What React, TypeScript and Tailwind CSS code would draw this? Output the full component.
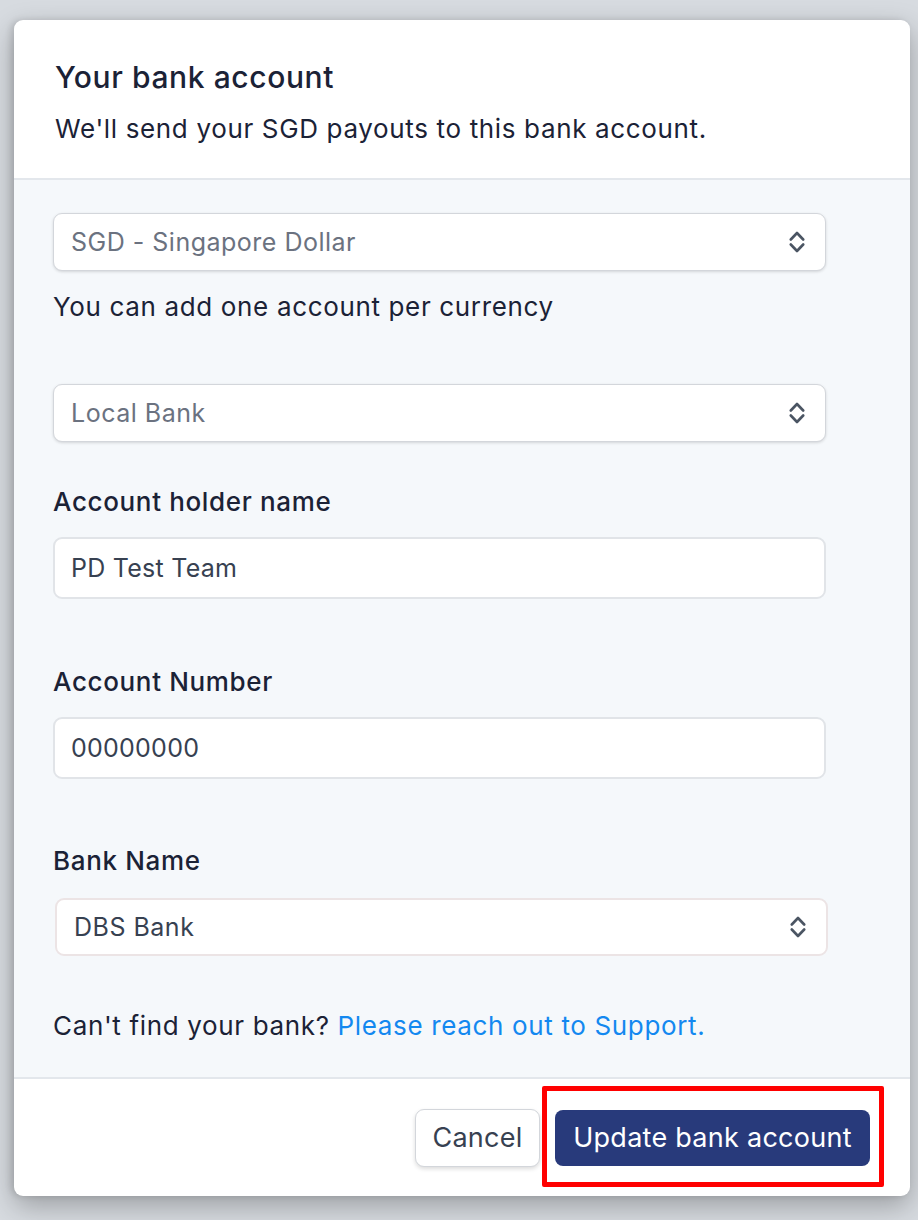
import React from 'react';

const Chevrons = () => (
  <svg width="16" height="24" viewBox="0 0 16 24" fill="none" stroke="#4b5563" strokeWidth="2.6" strokeLinecap="round" strokeLinejoin="round">
    <path d="M1.8 9.5 L8 3 L14.2 9.5" />
    <path d="M1.8 14.5 L8 21 L14.2 14.5" />
  </svg>
);

const SelectBox = ({ value, muted, className }: { value: string; muted?: boolean; className: string }) => (
  <div className={`flex items-center justify-between bg-white rounded-[9px] pl-[17px] pr-[20px] text-[25px] tracking-[0.02em] ${className}`}>
    <span className={muted ? 'text-[#6b7280]' : 'text-[#374151]'}>{value}</span>
    <Chevrons />
  </div>
);

const TextInput = ({ value }: { value: string }) => (
  <div className="flex items-center h-[62px] w-[773px] bg-white rounded-[9px] border-2 border-[#e1e4e8] px-[16px] text-[25px] tracking-[0.01em] text-[#374151]">
    {value}
  </div>
);

const App = () => {
  return (
    <div className="min-h-screen bg-[#d7dbe0] pt-[20px] pl-[14px] font-['Inter',sans-serif] text-[26px] tracking-[0.025em] leading-[36px] text-[#1b2236]">
      <div className="w-[896px] bg-white rounded-[9px] overflow-hidden shadow-[0_10px_28px_rgba(0,0,0,0.28),-3px_0_6px_rgba(0,0,0,0.12)]">
        {/* Header */}
        <div className="px-[41px] pt-[39px] pb-[31px] border-b-2 border-[#e3e7ec]">
          <h2 className="text-[30px] font-medium tracking-[0.02em]">Your bank account</h2>
          <p className="mt-[16px]">We'll send your SGD payouts to this bank account.</p>
        </div>

        {/* Form body */}
        <div className="bg-[#f5f8fb] px-[39px] pt-[33px] pb-[33px] flex flex-col">
          <SelectBox
            value="SGD - Singapore Dollar"
            muted
            className="h-[58px] w-[773px] border border-[#d3d6db] shadow-[0_1px_3px_rgba(0,0,0,0.14)]"
          />
          <p className="mt-[18px]">You can add one account per currency</p>
          <SelectBox
            value="Local Bank"
            muted
            className="mt-[59px] h-[58px] w-[773px] border border-[#d3d6db] shadow-[0_1px_3px_rgba(0,0,0,0.14)]"
          />

          <label className="mt-[42px] font-medium">Account holder name</label>
          <div className="mt-[17px]">
            <TextInput value="PD Test Team" />
          </div>

          <label className="mt-[65px] font-medium">Account Number</label>
          <div className="mt-[17px]">
            <TextInput value="00000000" />
          </div>

          <label className="mt-[64px] font-medium">Bank Name</label>
          <SelectBox
            value="DBS Bank"
            className="mt-[19px] ml-[2px] pl-[17px] h-[58px] w-[773px] border-2 border-[#ece4e5]"
          />

          <p className="mt-[52px]">
            Can't find your bank? <a className="text-[#1388f0]">Please reach out to Support.</a>
          </p>
        </div>

        {/* Footer */}
        <div className="border-t-2 border-[#e3e7ec] h-[119px] flex items-center justify-end gap-[15px] pr-[40px] text-[27px] tracking-[0.01em]">
          <button className="h-[58px] w-[125px] rounded-[9px] bg-white border border-[#d3d6db] shadow-[0_2px_4px_rgba(0,0,0,0.14)] text-[#374151]">
            Cancel
          </button>
          <div className="relative">
            <button className="h-[56px] w-[315px] rounded-[8px] bg-[#283a7b] text-white">
              Update bank account
            </button>
            <div className="absolute -left-[13px] -right-[14px] -top-[24px] -bottom-[21px] border-[5px] border-[#ff0000] rounded-[2px] pointer-events-none" />
          </div>
        </div>
      </div>
    </div>
  );
};

export default App;
